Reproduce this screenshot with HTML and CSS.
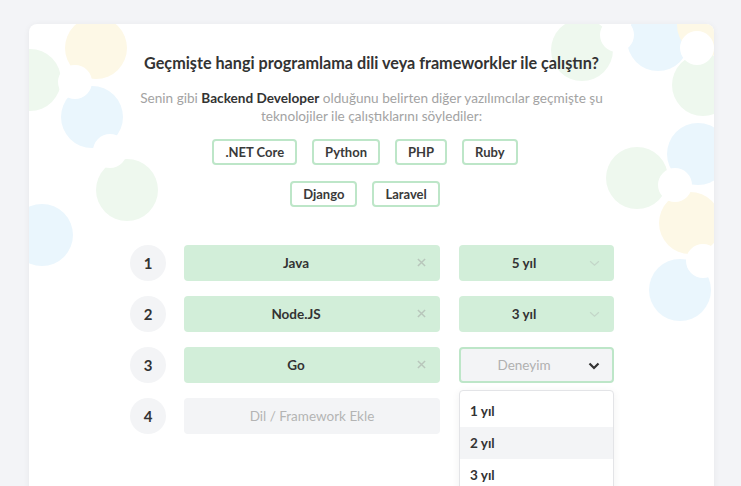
FILE: index.html
```html
<!DOCTYPE html>
<html lang="tr">
<head>
<meta charset="utf-8">
<title>Deneyim</title>
<link rel="stylesheet" href="styles.css">
</head>
<body>
<div class="card">
  <div class="decor">
    <span class="dot yellow" style="left:36px;top:-7px"></span>
    <span class="dot green" style="left:-30px;top:25px"></span>
    <span class="dot blue" style="left:32px;top:62px"></span>
    <span class="dot green" style="left:67px;top:135px"></span>
    <span class="dot blue" style="left:-18px;top:180px"></span>
    <span class="hole" style="left:29px;top:41px"></span>
    <span class="hole" style="left:64px;top:110px"></span>

    <span class="dot green" style="left:522px;top:-5px"></span>
    <span class="dot blue" style="left:598px;top:-15px"></span>
    <span class="dot yellow" style="left:648px;top:-30px"></span>
    <span class="dot green" style="left:643px;top:30px"></span>
    <span class="dot blue" style="left:638px;top:99px"></span>
    <span class="dot green" style="left:577px;top:123px"></span>
    <span class="dot yellow" style="left:630px;top:168px"></span>
    <span class="dot blue" style="left:620px;top:235px"></span>
    <span class="hole" style="left:571px;top:-6px"></span>
    <span class="hole" style="left:651px;top:7px"></span>
    <span class="hole" style="left:629px;top:144px"></span>
    <span class="hole" style="left:657px;top:220px"></span>
  </div>

  <div class="content">
    <h1 class="title">Geçmişte hangi programlama dili veya frameworkler ile çalıştın?</h1>
    <p class="subtitle">Senin gibi <strong>Backend Developer</strong> olduğunu belirten diğer yazılımcılar geçmişte şu teknolojiler ile çalıştıklarını söylediler:</p>

    <div class="tags">
      <div class="tag-row">
        <span class="tag">.NET Core</span>
        <span class="tag">Python</span>
        <span class="tag">PHP</span>
        <span class="tag">Ruby</span>
      </div>
      <div class="tag-row">
        <span class="tag">Django</span>
        <span class="tag">Laravel</span>
      </div>
    </div>

    <div class="rows">
      <div class="row">
        <span class="num">1</span>
        <div class="field filled">Java
          <svg class="x" viewBox="0 0 10 10"><path d="M1 1L9 9M9 1L1 9"/></svg>
        </div>
        <div class="select filled">5 yıl
          <svg class="chev light" viewBox="0 0 12 8"><path d="M1 1.5L6 6L11 1.5"/></svg>
        </div>
      </div>
      <div class="row">
        <span class="num">2</span>
        <div class="field filled">Node.JS
          <svg class="x" viewBox="0 0 10 10"><path d="M1 1L9 9M9 1L1 9"/></svg>
        </div>
        <div class="select filled">3 yıl
          <svg class="chev light" viewBox="0 0 12 8"><path d="M1 1.5L6 6L11 1.5"/></svg>
        </div>
      </div>
      <div class="row">
        <span class="num">3</span>
        <div class="field filled">Go
          <svg class="x" viewBox="0 0 10 10"><path d="M1 1L9 9M9 1L1 9"/></svg>
        </div>
        <div class="select-wrap">
          <div class="select open">Deneyim
            <svg class="chev dark" viewBox="0 0 12 8"><path d="M1.5 1.5L6 6L10.5 1.5"/></svg>
          </div>
          <ul class="menu">
            <li>1 yıl</li>
            <li class="hover">2 yıl</li>
            <li>3 yıl</li>
            <li>4 yıl</li>
          </ul>
        </div>
      </div>
      <div class="row">
        <span class="num">4</span>
        <div class="field empty">Dil / Framework Ekle</div>
        <div class="spacer"></div>
      </div>
    </div>
  </div>
</div>
</body>
</html>
```

FILE: styles.css
```css
* { box-sizing: border-box; }
html, body { height: 100%; }
body {
  margin: 0;
  background: #f3f4f7;
  font-family: Lato, "Noto Sans", sans-serif;
  color: #333;
  overflow: hidden;
}
.card {
  position: relative;
  margin: 24px 27px 0 29px;
  height: 520px;
  background: #fff;
  border-radius: 8px;
  box-shadow: 0 1px 6px rgba(0,0,0,0.06);
  overflow: hidden;
}
.decor { position: absolute; inset: 0; pointer-events: none; }
.dot {
  position: absolute;
  width: 62px; height: 62px;
  border-radius: 50%;
}
.yellow { background: #fdf8e6; }
.green { background: #eef8ee; }
.blue { background: #eaf6fd; }
.hole {
  position: absolute;
  width: 34px; height: 34px;
  border-radius: 50%;
  background: #fff;
}
.content {
  position: relative;
  padding-top: 29px;
  display: flex;
  flex-direction: column;
  align-items: center;
}
.title {
  margin: 0;
  font-size: 16.2px;
  font-weight: 700;
  color: #333;
  line-height: 20px;
}
.subtitle {
  margin: 16px 0 0;
  width: 490px;
  text-align: center;
  font-size: 13.6px;
  line-height: 18px;
  color: #a3a3a3;
}
.subtitle strong { color: #333; font-weight: 700; }
.tags {
  margin-top: 14px;
  padding-right: 13px;
  display: flex;
  flex-direction: column;
  align-items: center;
  gap: 16px;
}
.tag-row { display: flex; gap: 15px; }
.tag {
  height: 26px;
  padding: 0 11px;
  border: 2px solid #bde6c8;
  border-radius: 4px;
  font-size: 13px;
  font-weight: 700;
  color: #3a3a3a;
  display: flex;
  align-items: center;
}
.rows {
  margin-top: 38px;
  display: flex;
  flex-direction: column;
  gap: 15px;
}
.row {
  display: flex;
  align-items: center;
  gap: 18px;
  padding-left: 1px;
}
.num {
  width: 36px; height: 36px;
  border-radius: 50%;
  background: #f3f4f6;
  display: flex; align-items: center; justify-content: center;
  font-size: 15px;
  font-weight: 700;
  color: #333;
}
.field {
  position: relative;
  width: 256px; height: 36px;
  border-radius: 4px;
  display: flex; align-items: center; justify-content: center;
  font-size: 13.5px;
}
.field.filled { padding-right: 32px; }
.filled { background: #d2eed9; font-weight: 700; color: #333; }
.empty { background: #f3f4f6; color: #b4b4b4; }
.x {
  position: absolute;
  right: 14px; top: 13px;
  width: 9px; height: 9px;
  stroke: #b8c6bb;
  stroke-width: 1.6;
  fill: none;
}
.select, .spacer { width: 155px; height: 36px; margin-left: 1px; }
.select {
  position: relative;
  padding-right: 25px;
  border-radius: 4px;
  display: flex; align-items: center; justify-content: center;
  font-size: 13.5px;
}
.select-wrap { position: relative; }
.select.open {
  background: #f3f4f6;
  border: 2px solid #bde6c8;
  color: #b0b0b0;
  font-weight: 400;
}
.chev {
  position: absolute;
  right: 14px; top: 15px;
  width: 11px; height: 7px;
  fill: none;
}
.chev.light { stroke: #c3d6c8; stroke-width: 1.4; }
.chev.dark { stroke: #333; stroke-width: 2.2; right: 12px; top: 13px; width: 12px; height: 8px; }
.menu {
  position: absolute;
  left: 1px; top: 43px;
  width: 155px;
  margin: 0; padding: 4px 0 0;
  list-style: none;
  background: #fff;
  border: 1px solid #e3e4e7;
  border-radius: 4px;
  box-shadow: 0 2px 8px rgba(0,0,0,0.06);
  z-index: 2;
}
.menu li {
  height: 32px;
  padding-left: 10px;
  display: flex; align-items: center;
  font-size: 13.5px;
  font-weight: 700;
  color: #333;
}
.menu li.hover { background: #f3f4f6; }
```
